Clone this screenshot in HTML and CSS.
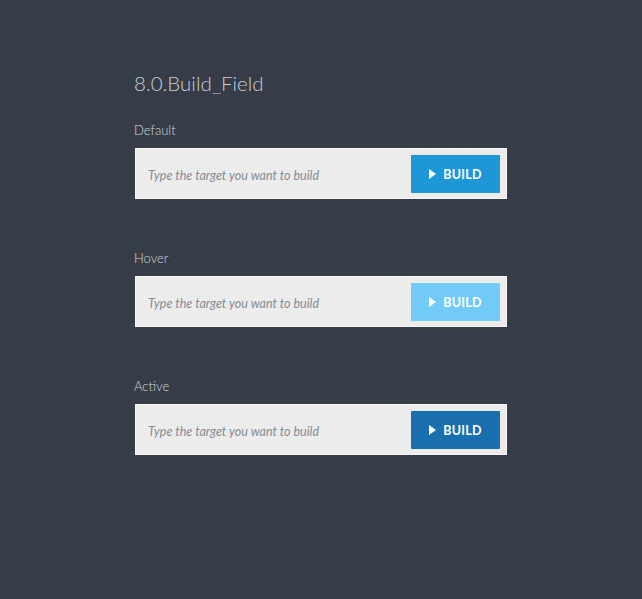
FILE: index.html
```html
<!DOCTYPE html>
<html>
<head>
<meta charset="utf-8">
<link rel="stylesheet" href="styles.css">
</head>
<body>
<main class="page">
  <h1 class="title">8.0.Build_Field</h1>
  <section class="state">
    <div class="label">Default</div>
    <div class="field">
      <span class="placeholder">Type the target you want to build</span>
      <span class="btn btn-default"><svg class="tri" viewBox="0 0 7 10" width="7" height="10"><path d="M0 0 L7 5 L0 10 Z" fill="#fff"/></svg><span class="btn-text">BUILD</span></span>
    </div>
  </section>
  <section class="state">
    <div class="label">Hover</div>
    <div class="field">
      <span class="placeholder">Type the target you want to build</span>
      <span class="btn btn-hover"><svg class="tri" viewBox="0 0 7 10" width="7" height="10"><path d="M0 0 L7 5 L0 10 Z" fill="#fff"/></svg><span class="btn-text">BUILD</span></span>
    </div>
  </section>
  <section class="state">
    <div class="label">Active</div>
    <div class="field">
      <span class="placeholder">Type the target you want to build</span>
      <span class="btn btn-active"><svg class="tri" viewBox="0 0 7 10" width="7" height="10"><path d="M0 0 L7 5 L0 10 Z" fill="#fff"/></svg><span class="btn-text">BUILD</span></span>
    </div>
  </section>
</main>
</body>
</html>
```
FILE: styles.css
```css
html, body {
  margin: 0;
  padding: 0;
  background: #363d48;
  height: 100%;
}
body {
  font-family: Lato, "Open Sans", sans-serif;
}
.page {
  padding: 68px 0 0 134px;
  display: flex;
  flex-direction: column;
  gap: 51px;
}
.title {
  margin: 0 0 -27px 0;
  font-weight: 300;
  font-size: 20.5px;
  line-height: 30px;
  color: #c9ced6;
}
.state {
  display: flex;
  flex-direction: column;
  gap: 10px;
}
.label {
  font-size: 13px;
  line-height: 16px;
  color: #d3d7dd;
  font-weight: 300;
}
.field {
  box-sizing: border-box;
  margin-left: 1px;
  width: 372px;
  height: 51px;
  background: #ececec;
  border: 1px solid #f7f7f7;
  display: flex;
  align-items: center;
  justify-content: space-between;
  padding: 0 6px 0 12px;
}
.placeholder {
  font-style: italic;
  font-size: 12.5px;
  color: #858b95;
  padding-top: 4px;
}
.btn {
  width: 89px;
  height: 38px;
  display: flex;
  align-items: center;
  justify-content: center;
  gap: 7px;
  color: #fff;
  font-weight: 700;
  font-size: 12.5px;
  letter-spacing: 0.3px;
  border-radius: 1px;
}
.btn-text { padding-top: 1px; }
.tri { display: block; }
.btn-default { background: #1d97d6; }
.btn-hover { background: #72caf6; }
.btn-active { background: #1a70ae; }
```
